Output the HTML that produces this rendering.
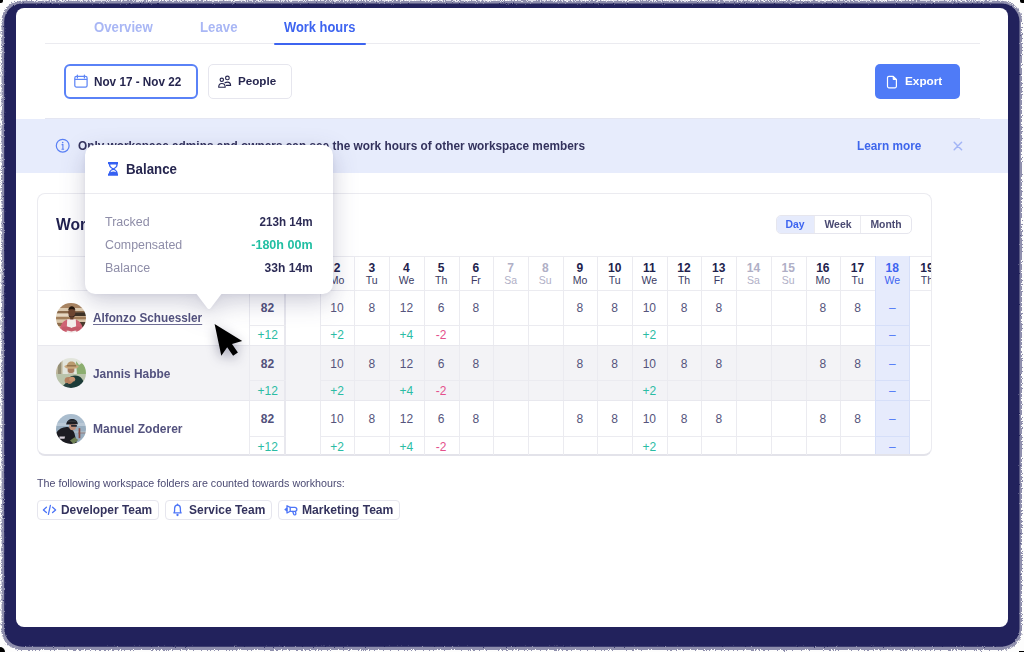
<!DOCTYPE html>
<html><head><meta charset="utf-8">
<style>
*{box-sizing:border-box;margin:0;padding:0}
html,body{width:1024px;height:652px;overflow:hidden;background:#fdfdfd;font-family:"Liberation Sans",sans-serif;position:relative}
.a{position:absolute}
.t{position:absolute;line-height:1;white-space:nowrap}
</style></head>
<body>
<svg class="a" style="left:0;top:0" width="1024" height="652" viewBox="0 0 1024 652"><defs><filter id="rough" x="-2%" y="-2%" width="104%" height="104%"><feTurbulence type="fractalNoise" baseFrequency="1.3" numOctaves="1" seed="3" result="n"/><feDisplacementMap in="SourceGraphic" in2="n" scale="5" xChannelSelector="R" yChannelSelector="G" result="d"/><feGaussianBlur in="d" stdDeviation=".45"/></filter><filter id="rough2" x="-2%" y="-2%" width="104%" height="104%"><feTurbulence type="fractalNoise" baseFrequency="1.1" numOctaves="1" seed="7" result="n"/><feDisplacementMap in="SourceGraphic" in2="n" scale="2.5" xChannelSelector="R" yChannelSelector="G"/></filter></defs><rect x="1.5" y="0.8" width="1020.5" height="649.2" rx="20" fill="#23235b" fill-opacity=".5" filter="url(#rough)"/><rect x="4.2" y="3.4" width="1015.3" height="643.3" rx="18" fill="#23235b" filter="url(#rough2)"/></svg>
<div class="a" style="left:0;top:0;width:3px;height:2.5px;background:#000;border-bottom-right-radius:2px"></div>
<div class="a" style="left:1020px;top:0;width:4px;height:2.5px;background:#000;border-bottom-left-radius:2px"></div>
<div class="a" style="left:1019px;top:651px;width:5px;height:1px;background:#000"></div>
<div class="a" style="left:0;top:647px;width:5px;height:5px;background:#000;border-top-right-radius:5px"></div>
<div class="a" style="left:16.00px;top:7.60px;width:992.00px;height:619.80px;background:#fff;border-radius:8px"></div>
<div class="t" style="left:94.00px;top:20.05px;font-size:14.0px;color:#a9b7f5;font-weight:700;transform:scaleX(0.9427);transform-origin:left center;">Overview</div>
<div class="t" style="left:199.50px;top:20.05px;font-size:14.0px;color:#a9b7f5;font-weight:700;transform:scaleX(0.9445);transform-origin:left center;">Leave</div>
<div class="t" style="left:283.60px;top:20.72px;font-size:13.8px;color:#3d64f0;font-weight:700;transform:scaleX(0.9345);transform-origin:left center;">Work hours</div>
<div class="a" style="left:44.50px;top:43.30px;width:935.50px;height:1.00px;background:#ebebf0"></div>
<div class="a" style="left:274.00px;top:42.50px;width:92.00px;height:2.20px;background:#3d64f0;border-radius:1px"></div>
<div class="a" style="left:64.40px;top:64.20px;width:133.60px;height:34.80px;border:2px solid #5a82f7;border-radius:6px"></div>
<svg class="a" style="left:73px;top:74px" width="16" height="15" viewBox="0 0 16 15"><rect x="1.8" y="2.3" width="12.3" height="10.8" rx="1.6" fill="none" stroke="#5f86f6" stroke-width="1.25"/><line x1="1.8" y1="5.4" x2="14.1" y2="5.4" stroke="#5f86f6" stroke-width="1.2"/><line x1="4.4" y1="1" x2="4.4" y2="4" stroke="#5f86f6" stroke-width="1.2" stroke-linecap="round"/><line x1="11.4" y1="1" x2="11.4" y2="4" stroke="#5f86f6" stroke-width="1.2" stroke-linecap="round"/></svg>
<div class="t" style="left:93.90px;top:75.70px;font-size:12.4px;color:#26264f;font-weight:700;transform:scaleX(0.9460);transform-origin:left center;">Nov 17 - Nov 22</div>
<div class="a" style="left:208.30px;top:64.40px;width:84.00px;height:34.20px;border:1px solid #e6e6ee;border-radius:5px"></div>
<svg class="a" style="left:217px;top:75px" width="16" height="14" viewBox="0 0 16 14"><circle cx="4.8" cy="4.8" r="1.7" fill="none" stroke="#26264f" stroke-width="1.15"/><path d="M1.7 12.2C1.7 9.9 3.1 8.5 4.9 8.5S8.2 9.9 8.2 12.2Z" fill="none" stroke="#26264f" stroke-width="1.15" stroke-linejoin="round"/><circle cx="10.4" cy="2.9" r="1.85" fill="none" stroke="#26264f" stroke-width="1.15"/><path d="M8 7.8C8.6 7.4 9.4 7.1 10.4 7.1 12.3 7.1 13.6 8.5 13.6 10.4H9.5" fill="none" stroke="#26264f" stroke-width="1.15" stroke-linejoin="round" stroke-linecap="round"/></svg>
<div class="t" style="left:238.00px;top:76.11px;font-size:11.8px;color:#26264f;font-weight:700;transform:scaleX(0.9874);transform-origin:left center;">People</div>
<div class="a" style="left:875.30px;top:64.30px;width:84.50px;height:34.50px;background:#4f7bf7;border-radius:5px"></div>
<svg class="a" style="left:886px;top:74.5px" width="12" height="14" viewBox="0 0 12 14"><path d="M3 1.3H7.2L10.4 4.5V11.3A1.5 1.5 0 0 1 8.9 12.8H3A1.5 1.5 0 0 1 1.5 11.3V2.8A1.5 1.5 0 0 1 3 1.3Z" fill="none" stroke="#fff" stroke-width="1.2" stroke-linejoin="round"/><path d="M7.2 1.3V4.5H10.4Z" fill="#fff" stroke="#fff" stroke-width="1" stroke-linejoin="round"/></svg>
<div class="t" style="left:904.90px;top:76.31px;font-size:11.8px;color:#fff;font-weight:700;transform:scaleX(0.9980);transform-origin:left center;">Export</div>
<div class="a" style="left:16.00px;top:118.50px;width:992.00px;height:54.00px;background:#e7ecfc"></div>
<svg class="a" style="left:55px;top:138px" width="16" height="16" viewBox="0 0 16 16"><circle cx="7.7" cy="7.7" r="6.4" fill="none" stroke="#5a80f5" stroke-width="1.2"/><circle cx="7.7" cy="4.6" r=".8" fill="#5a80f5"/><path d="M6.6 6.6h1.3v4.6M6.5 11.2h2.6" fill="none" stroke="#5a80f5" stroke-width="1.1"/></svg>
<div class="t" style="left:78.40px;top:140.19px;font-size:12.3px;color:#33325d;font-weight:700;transform:scaleX(0.9622);transform-origin:left center;">Only workspace admins and owners can see the work hours of other workspace members</div>
<div class="t" style="left:856.90px;top:140.24px;font-size:12.0px;color:#3e66ec;font-weight:700;transform:scaleX(0.9838);transform-origin:left center;">Learn more</div>
<svg class="a" style="left:950px;top:138px" width="16" height="16" viewBox="950 138 16 16"><path d="M954.2 142.3L961.6 149.7M961.6 142.3L954.2 149.7" stroke="#a3b5f6" stroke-width="1.5" stroke-linecap="round"/></svg>
<div class="a" style="left:37.00px;top:193.30px;width:894.50px;height:262.90px;border:1px solid #ebebf0;border-bottom:2px solid #e3e3ea;border-radius:8px;background:#fff"></div>
<div class="t" style="left:56.00px;top:216.22px;font-size:16.4px;color:#1f1f4e;font-weight:700;transform:scaleX(0.9530);transform-origin:left center;">Work hours</div>
<div class="a" style="left:776.00px;top:214.60px;width:135.50px;height:19.60px;border:1px solid #e6e6ee;border-radius:5px;overflow:hidden"></div>
<div class="a" style="left:777.00px;top:215.60px;width:37.10px;height:17.60px;background:#e6ebfc;border-radius:4px 0 0 4px"></div>
<div class="a" style="left:814.10px;top:215.60px;width:1.00px;height:17.60px;background:#ebebf0"></div>
<div class="a" style="left:859.80px;top:215.60px;width:1.00px;height:17.60px;background:#ebebf0"></div>
<div class="t" style="left:694.85px;width:200px;text-align:center;top:219.23px;font-size:10.6px;color:#3d64f0;font-weight:700;transform:scaleX(0.9826);transform-origin:center center;">Day</div>
<div class="t" style="left:737.70px;width:200px;text-align:center;top:219.23px;font-size:10.6px;color:#4a4a72;font-weight:700;transform:scaleX(0.9897);transform-origin:center center;">Week</div>
<div class="t" style="left:786.00px;width:200px;text-align:center;top:219.23px;font-size:10.6px;color:#4a4a72;font-weight:700;transform:scaleX(0.9817);transform-origin:center center;">Month</div>
<div class="a" style="left:38.00px;top:256.20px;width:892.50px;height:1.20px;background:#ebebf0"></div>
<div class="a" style="left:38.00px;top:289.60px;width:892.50px;height:1.00px;background:#ebebf0"></div>
<div class="a" style="left:38.00px;top:346.00px;width:836.90px;height:55.20px;background:#f3f3f6"></div>
<div class="a" style="left:874.90px;top:256.20px;width:34.70px;height:198.00px;background:#e6ebfc;border-left:1px solid #d6dff9;border-right:1px solid #d6dff9"></div>
<div class="t" style="left:202.35px;width:200px;text-align:center;top:261.64px;font-size:12px;color:#b0afc6;font-weight:700;">1</div>
<div class="t" style="left:202.35px;width:200px;text-align:center;top:274.61px;font-size:10.5px;color:#b0afc6;font-weight:400;">Su</div>
<div class="t" style="left:237.05px;width:200px;text-align:center;top:261.64px;font-size:12px;color:#22224d;font-weight:700;">2</div>
<div class="t" style="left:237.05px;width:200px;text-align:center;top:274.61px;font-size:10.5px;color:#3a3a63;font-weight:400;">Mo</div>
<div class="t" style="left:271.75px;width:200px;text-align:center;top:261.64px;font-size:12px;color:#22224d;font-weight:700;">3</div>
<div class="t" style="left:271.75px;width:200px;text-align:center;top:274.61px;font-size:10.5px;color:#3a3a63;font-weight:400;">Tu</div>
<div class="t" style="left:306.45px;width:200px;text-align:center;top:261.64px;font-size:12px;color:#22224d;font-weight:700;">4</div>
<div class="t" style="left:306.45px;width:200px;text-align:center;top:274.61px;font-size:10.5px;color:#3a3a63;font-weight:400;">We</div>
<div class="t" style="left:341.15px;width:200px;text-align:center;top:261.64px;font-size:12px;color:#22224d;font-weight:700;">5</div>
<div class="t" style="left:341.15px;width:200px;text-align:center;top:274.61px;font-size:10.5px;color:#3a3a63;font-weight:400;">Th</div>
<div class="t" style="left:375.85px;width:200px;text-align:center;top:261.64px;font-size:12px;color:#22224d;font-weight:700;">6</div>
<div class="t" style="left:375.85px;width:200px;text-align:center;top:274.61px;font-size:10.5px;color:#3a3a63;font-weight:400;">Fr</div>
<div class="t" style="left:410.55px;width:200px;text-align:center;top:261.64px;font-size:12px;color:#b0afc6;font-weight:700;">7</div>
<div class="t" style="left:410.55px;width:200px;text-align:center;top:274.61px;font-size:10.5px;color:#b0afc6;font-weight:400;">Sa</div>
<div class="t" style="left:445.25px;width:200px;text-align:center;top:261.64px;font-size:12px;color:#b0afc6;font-weight:700;">8</div>
<div class="t" style="left:445.25px;width:200px;text-align:center;top:274.61px;font-size:10.5px;color:#b0afc6;font-weight:400;">Su</div>
<div class="t" style="left:479.95px;width:200px;text-align:center;top:261.64px;font-size:12px;color:#22224d;font-weight:700;">9</div>
<div class="t" style="left:479.95px;width:200px;text-align:center;top:274.61px;font-size:10.5px;color:#3a3a63;font-weight:400;">Mo</div>
<div class="t" style="left:514.65px;width:200px;text-align:center;top:261.64px;font-size:12px;color:#22224d;font-weight:700;">10</div>
<div class="t" style="left:514.65px;width:200px;text-align:center;top:274.61px;font-size:10.5px;color:#3a3a63;font-weight:400;">Tu</div>
<div class="t" style="left:549.35px;width:200px;text-align:center;top:261.64px;font-size:12px;color:#22224d;font-weight:700;">11</div>
<div class="t" style="left:549.35px;width:200px;text-align:center;top:274.61px;font-size:10.5px;color:#3a3a63;font-weight:400;">We</div>
<div class="t" style="left:584.05px;width:200px;text-align:center;top:261.64px;font-size:12px;color:#22224d;font-weight:700;">12</div>
<div class="t" style="left:584.05px;width:200px;text-align:center;top:274.61px;font-size:10.5px;color:#3a3a63;font-weight:400;">Th</div>
<div class="t" style="left:618.75px;width:200px;text-align:center;top:261.64px;font-size:12px;color:#22224d;font-weight:700;">13</div>
<div class="t" style="left:618.75px;width:200px;text-align:center;top:274.61px;font-size:10.5px;color:#3a3a63;font-weight:400;">Fr</div>
<div class="t" style="left:653.45px;width:200px;text-align:center;top:261.64px;font-size:12px;color:#b0afc6;font-weight:700;">14</div>
<div class="t" style="left:653.45px;width:200px;text-align:center;top:274.61px;font-size:10.5px;color:#b0afc6;font-weight:400;">Sa</div>
<div class="t" style="left:688.15px;width:200px;text-align:center;top:261.64px;font-size:12px;color:#b0afc6;font-weight:700;">15</div>
<div class="t" style="left:688.15px;width:200px;text-align:center;top:274.61px;font-size:10.5px;color:#b0afc6;font-weight:400;">Su</div>
<div class="t" style="left:722.85px;width:200px;text-align:center;top:261.64px;font-size:12px;color:#22224d;font-weight:700;">16</div>
<div class="t" style="left:722.85px;width:200px;text-align:center;top:274.61px;font-size:10.5px;color:#3a3a63;font-weight:400;">Mo</div>
<div class="t" style="left:757.55px;width:200px;text-align:center;top:261.64px;font-size:12px;color:#22224d;font-weight:700;">17</div>
<div class="t" style="left:757.55px;width:200px;text-align:center;top:274.61px;font-size:10.5px;color:#3a3a63;font-weight:400;">Tu</div>
<div class="t" style="left:792.25px;width:200px;text-align:center;top:261.64px;font-size:12px;color:#3d64f0;font-weight:700;">18</div>
<div class="t" style="left:792.25px;width:200px;text-align:center;top:274.61px;font-size:10.5px;color:#3d64f0;font-weight:400;">We</div>
<div class="a" style="left:0;top:0;width:930.5px;height:300px;overflow:hidden">
<div class="t" style="left:826.95px;width:200px;text-align:center;top:261.64px;font-size:12px;color:#22224d;font-weight:700;">19</div>
<div class="t" style="left:826.95px;width:200px;text-align:center;top:274.61px;font-size:10.5px;color:#3a3a63;font-weight:400;">Th</div>
</div>
<div class="a" style="left:249.30px;top:256.20px;width:1.00px;height:199.00px;background:#ebebf0"></div>
<div class="a" style="left:284.20px;top:256.20px;width:1.60px;height:199.00px;background:#e8e8ee"></div>
<div class="a" style="left:319.70px;top:256.20px;width:1.00px;height:199.00px;background:#ebebf0"></div>
<div class="a" style="left:354.40px;top:256.20px;width:1.00px;height:199.00px;background:#ebebf0"></div>
<div class="a" style="left:389.10px;top:256.20px;width:1.00px;height:199.00px;background:#ebebf0"></div>
<div class="a" style="left:423.80px;top:256.20px;width:1.00px;height:199.00px;background:#ebebf0"></div>
<div class="a" style="left:458.50px;top:256.20px;width:1.00px;height:199.00px;background:#ebebf0"></div>
<div class="a" style="left:493.20px;top:256.20px;width:1.00px;height:199.00px;background:#ebebf0"></div>
<div class="a" style="left:527.90px;top:256.20px;width:1.00px;height:199.00px;background:#ebebf0"></div>
<div class="a" style="left:562.60px;top:256.20px;width:1.00px;height:199.00px;background:#ebebf0"></div>
<div class="a" style="left:597.30px;top:256.20px;width:1.00px;height:199.00px;background:#ebebf0"></div>
<div class="a" style="left:632.00px;top:256.20px;width:1.00px;height:199.00px;background:#ebebf0"></div>
<div class="a" style="left:666.70px;top:256.20px;width:1.00px;height:199.00px;background:#ebebf0"></div>
<div class="a" style="left:701.40px;top:256.20px;width:1.00px;height:199.00px;background:#ebebf0"></div>
<div class="a" style="left:736.10px;top:256.20px;width:1.00px;height:199.00px;background:#ebebf0"></div>
<div class="a" style="left:770.80px;top:256.20px;width:1.00px;height:199.00px;background:#ebebf0"></div>
<div class="a" style="left:805.50px;top:256.20px;width:1.00px;height:199.00px;background:#ebebf0"></div>
<div class="a" style="left:840.20px;top:256.20px;width:1.00px;height:199.00px;background:#ebebf0"></div>
<div class="a" style="left:250.00px;top:324.50px;width:35.50px;height:1.00px;background:#ebebf0"></div>
<div class="a" style="left:319.70px;top:324.50px;width:555.20px;height:1.00px;background:#ebebf0"></div>
<div class="a" style="left:875.90px;top:324.50px;width:32.70px;height:1.00px;background:#d6dff9"></div>
<div class="a" style="left:38.00px;top:344.50px;width:836.90px;height:1.40px;background:#e8e8ee"></div>
<div class="a" style="left:875.90px;top:344.50px;width:32.70px;height:1.40px;background:#d6dff9"></div>
<div class="a" style="left:909.60px;top:344.50px;width:20.90px;height:1.40px;background:#e8e8ee"></div>
<div class="a" style="left:250.00px;top:380.10px;width:35.50px;height:1.00px;background:#ebebf0"></div>
<div class="a" style="left:319.70px;top:380.10px;width:555.20px;height:1.00px;background:#ebebf0"></div>
<div class="a" style="left:875.90px;top:380.10px;width:32.70px;height:1.00px;background:#d6dff9"></div>
<div class="a" style="left:38.00px;top:400.10px;width:836.90px;height:1.40px;background:#e8e8ee"></div>
<div class="a" style="left:875.90px;top:400.10px;width:32.70px;height:1.40px;background:#d6dff9"></div>
<div class="a" style="left:909.60px;top:400.10px;width:20.90px;height:1.40px;background:#e8e8ee"></div>
<div class="a" style="left:250.00px;top:435.70px;width:35.50px;height:1.00px;background:#ebebf0"></div>
<div class="a" style="left:319.70px;top:435.70px;width:555.20px;height:1.00px;background:#ebebf0"></div>
<div class="a" style="left:875.90px;top:435.70px;width:32.70px;height:1.00px;background:#d6dff9"></div>
<div class="t" style="left:92.90px;top:311.97px;font-size:12.2px;color:#53527e;font-weight:700;transform:scaleX(0.9654);transform-origin:left center;text-decoration:underline;text-underline-offset:2px;text-decoration-thickness:1px;text-decoration-color:#6f6e95">Alfonzo Schuessler</div>
<div class="t" style="left:167.50px;width:200px;text-align:center;top:302.04px;font-size:12px;color:#52517c;font-weight:700;">82</div>
<div class="t" style="left:167.80px;width:200px;text-align:center;top:329.44px;font-size:12px;color:#2bbca4;font-weight:400;">+12</div>
<div class="t" style="left:237.05px;width:200px;text-align:center;top:302.04px;font-size:12px;color:#55547c;font-weight:400;">10</div>
<div class="t" style="left:237.05px;width:200px;text-align:center;top:329.44px;font-size:12px;color:#2bbca4;font-weight:400;">+2</div>
<div class="t" style="left:271.75px;width:200px;text-align:center;top:302.04px;font-size:12px;color:#55547c;font-weight:400;">8</div>
<div class="t" style="left:306.45px;width:200px;text-align:center;top:302.04px;font-size:12px;color:#55547c;font-weight:400;">12</div>
<div class="t" style="left:306.45px;width:200px;text-align:center;top:329.44px;font-size:12px;color:#2bbca4;font-weight:400;">+4</div>
<div class="t" style="left:341.15px;width:200px;text-align:center;top:302.04px;font-size:12px;color:#55547c;font-weight:400;">6</div>
<div class="t" style="left:341.15px;width:200px;text-align:center;top:329.44px;font-size:12px;color:#e4508c;font-weight:400;">-2</div>
<div class="t" style="left:375.85px;width:200px;text-align:center;top:302.04px;font-size:12px;color:#55547c;font-weight:400;">8</div>
<div class="t" style="left:479.95px;width:200px;text-align:center;top:302.04px;font-size:12px;color:#55547c;font-weight:400;">8</div>
<div class="t" style="left:514.65px;width:200px;text-align:center;top:302.04px;font-size:12px;color:#55547c;font-weight:400;">8</div>
<div class="t" style="left:549.35px;width:200px;text-align:center;top:302.04px;font-size:12px;color:#55547c;font-weight:400;">10</div>
<div class="t" style="left:549.35px;width:200px;text-align:center;top:329.44px;font-size:12px;color:#2bbca4;font-weight:400;">+2</div>
<div class="t" style="left:584.05px;width:200px;text-align:center;top:302.04px;font-size:12px;color:#55547c;font-weight:400;">8</div>
<div class="t" style="left:618.75px;width:200px;text-align:center;top:302.04px;font-size:12px;color:#55547c;font-weight:400;">8</div>
<div class="t" style="left:722.85px;width:200px;text-align:center;top:302.04px;font-size:12px;color:#55547c;font-weight:400;">8</div>
<div class="t" style="left:757.55px;width:200px;text-align:center;top:302.04px;font-size:12px;color:#55547c;font-weight:400;">8</div>
<div class="t" style="left:792.25px;width:200px;text-align:center;top:302.04px;font-size:12px;color:#5079f7;font-weight:400;">–</div>
<div class="t" style="left:792.25px;width:200px;text-align:center;top:329.44px;font-size:12px;color:#5079f7;font-weight:400;">–</div>
<div class="t" style="left:92.90px;top:367.57px;font-size:12.2px;color:#53527e;font-weight:700;transform:scaleX(0.9767);transform-origin:left center;">Jannis Habbe</div>
<div class="t" style="left:167.50px;width:200px;text-align:center;top:357.64px;font-size:12px;color:#52517c;font-weight:700;">82</div>
<div class="t" style="left:167.80px;width:200px;text-align:center;top:385.04px;font-size:12px;color:#2bbca4;font-weight:400;">+12</div>
<div class="t" style="left:237.05px;width:200px;text-align:center;top:357.64px;font-size:12px;color:#55547c;font-weight:400;">10</div>
<div class="t" style="left:237.05px;width:200px;text-align:center;top:385.04px;font-size:12px;color:#2bbca4;font-weight:400;">+2</div>
<div class="t" style="left:271.75px;width:200px;text-align:center;top:357.64px;font-size:12px;color:#55547c;font-weight:400;">8</div>
<div class="t" style="left:306.45px;width:200px;text-align:center;top:357.64px;font-size:12px;color:#55547c;font-weight:400;">12</div>
<div class="t" style="left:306.45px;width:200px;text-align:center;top:385.04px;font-size:12px;color:#2bbca4;font-weight:400;">+4</div>
<div class="t" style="left:341.15px;width:200px;text-align:center;top:357.64px;font-size:12px;color:#55547c;font-weight:400;">6</div>
<div class="t" style="left:341.15px;width:200px;text-align:center;top:385.04px;font-size:12px;color:#e4508c;font-weight:400;">-2</div>
<div class="t" style="left:375.85px;width:200px;text-align:center;top:357.64px;font-size:12px;color:#55547c;font-weight:400;">8</div>
<div class="t" style="left:479.95px;width:200px;text-align:center;top:357.64px;font-size:12px;color:#55547c;font-weight:400;">8</div>
<div class="t" style="left:514.65px;width:200px;text-align:center;top:357.64px;font-size:12px;color:#55547c;font-weight:400;">8</div>
<div class="t" style="left:549.35px;width:200px;text-align:center;top:357.64px;font-size:12px;color:#55547c;font-weight:400;">10</div>
<div class="t" style="left:549.35px;width:200px;text-align:center;top:385.04px;font-size:12px;color:#2bbca4;font-weight:400;">+2</div>
<div class="t" style="left:584.05px;width:200px;text-align:center;top:357.64px;font-size:12px;color:#55547c;font-weight:400;">8</div>
<div class="t" style="left:618.75px;width:200px;text-align:center;top:357.64px;font-size:12px;color:#55547c;font-weight:400;">8</div>
<div class="t" style="left:722.85px;width:200px;text-align:center;top:357.64px;font-size:12px;color:#55547c;font-weight:400;">8</div>
<div class="t" style="left:757.55px;width:200px;text-align:center;top:357.64px;font-size:12px;color:#55547c;font-weight:400;">8</div>
<div class="t" style="left:792.25px;width:200px;text-align:center;top:357.64px;font-size:12px;color:#5079f7;font-weight:400;">–</div>
<div class="t" style="left:792.25px;width:200px;text-align:center;top:385.04px;font-size:12px;color:#5079f7;font-weight:400;">–</div>
<div class="t" style="left:92.90px;top:423.17px;font-size:12.2px;color:#53527e;font-weight:700;transform:scaleX(0.9862);transform-origin:left center;">Manuel Zoderer</div>
<div class="t" style="left:167.50px;width:200px;text-align:center;top:413.24px;font-size:12px;color:#52517c;font-weight:700;">82</div>
<div class="t" style="left:167.80px;width:200px;text-align:center;top:440.64px;font-size:12px;color:#2bbca4;font-weight:400;">+12</div>
<div class="t" style="left:237.05px;width:200px;text-align:center;top:413.24px;font-size:12px;color:#55547c;font-weight:400;">10</div>
<div class="t" style="left:237.05px;width:200px;text-align:center;top:440.64px;font-size:12px;color:#2bbca4;font-weight:400;">+2</div>
<div class="t" style="left:271.75px;width:200px;text-align:center;top:413.24px;font-size:12px;color:#55547c;font-weight:400;">8</div>
<div class="t" style="left:306.45px;width:200px;text-align:center;top:413.24px;font-size:12px;color:#55547c;font-weight:400;">12</div>
<div class="t" style="left:306.45px;width:200px;text-align:center;top:440.64px;font-size:12px;color:#2bbca4;font-weight:400;">+4</div>
<div class="t" style="left:341.15px;width:200px;text-align:center;top:413.24px;font-size:12px;color:#55547c;font-weight:400;">6</div>
<div class="t" style="left:341.15px;width:200px;text-align:center;top:440.64px;font-size:12px;color:#e4508c;font-weight:400;">-2</div>
<div class="t" style="left:375.85px;width:200px;text-align:center;top:413.24px;font-size:12px;color:#55547c;font-weight:400;">8</div>
<div class="t" style="left:479.95px;width:200px;text-align:center;top:413.24px;font-size:12px;color:#55547c;font-weight:400;">8</div>
<div class="t" style="left:514.65px;width:200px;text-align:center;top:413.24px;font-size:12px;color:#55547c;font-weight:400;">8</div>
<div class="t" style="left:549.35px;width:200px;text-align:center;top:413.24px;font-size:12px;color:#55547c;font-weight:400;">10</div>
<div class="t" style="left:549.35px;width:200px;text-align:center;top:440.64px;font-size:12px;color:#2bbca4;font-weight:400;">+2</div>
<div class="t" style="left:584.05px;width:200px;text-align:center;top:413.24px;font-size:12px;color:#55547c;font-weight:400;">8</div>
<div class="t" style="left:618.75px;width:200px;text-align:center;top:413.24px;font-size:12px;color:#55547c;font-weight:400;">8</div>
<div class="t" style="left:722.85px;width:200px;text-align:center;top:413.24px;font-size:12px;color:#55547c;font-weight:400;">8</div>
<div class="t" style="left:757.55px;width:200px;text-align:center;top:413.24px;font-size:12px;color:#55547c;font-weight:400;">8</div>
<div class="t" style="left:792.25px;width:200px;text-align:center;top:413.24px;font-size:12px;color:#5079f7;font-weight:400;">–</div>
<div class="t" style="left:792.25px;width:200px;text-align:center;top:440.64px;font-size:12px;color:#5079f7;font-weight:400;">–</div>
<svg class="a" style="left:56px;top:302.7px" width="30" height="30" viewBox="0 0 30 30"><defs><clipPath id="av0"><circle cx="15" cy="15" r="15"/></clipPath><filter id="avb0" x="-10%" y="-10%" width="120%" height="120%"><feGaussianBlur stdDeviation=".5"/></filter></defs><g clip-path="url(#av0)"><g filter="url(#avb0)"><rect width="30" height="30" fill="#c4a888"/>
 <rect y="0" width="30" height="5" fill="#a88462"/>
 <rect y="5" width="30" height="3" fill="#dccab0"/>
 <rect y="8" width="30" height="2.5" fill="#8a6a4c"/>
 <rect y="10.5" width="14" height="3" fill="#e6d8c2"/>
 <rect x="18" y="9.5" width="12" height="3.5" fill="#3e3028"/>
 <rect y="14" width="30" height="2.5" fill="#a27e5a"/>
 <rect y="16.5" width="30" height="3" fill="#d8c6aa"/>
 <rect x="0" y="20" width="30" height="3" fill="#8e6c4c"/>
 <rect x="23" y="19" width="7" height="8" fill="#4a3a2e"/>
 <path d="M3.5 30c0-8 3.5-14 12-14S27 22 27.5 30z" fill="#cf6474"/>
 <path d="M11.2 16.3h8.6l.6 13.7H10.6z" fill="#f3eeec"/>
 <path d="M6 24.5c3-1.5 6.5-1 9.5.5 3-1.5 6.5-2 9.5-.5v3.5c-3-1-6.5-.6-9.5.6-3-1.2-6.5-1.6-9.5-.6z" fill="#c45a6a"/>
 <ellipse cx="15.8" cy="9.6" rx="3.6" ry="4.8" fill="#6e4632"/>
 <path d="M12.2 7.4c.3-3 2-4.2 3.6-4.2s3.4 1.2 3.6 4.2c-1-.8-2.2-1.1-3.6-1.1s-2.6.3-3.6 1.1z" fill="#24180f"/>
 <path d="M12.6 11.8c.9 2.4 5.5 2.4 6.4 0 0 1.6-.8 3-3.2 3s-3.2-1.4-3.2-3z" fill="#30201a"/>
 <rect x="14.2" y="13.8" width="3.2" height="2.6" fill="#5e3c2c"/></g></g></svg>
<svg class="a" style="left:56px;top:358.3px" width="30" height="30" viewBox="0 0 30 30"><defs><clipPath id="av1"><circle cx="15" cy="15" r="15"/></clipPath><filter id="avb1" x="-10%" y="-10%" width="120%" height="120%"><feGaussianBlur stdDeviation=".5"/></filter></defs><g clip-path="url(#av1)"><g filter="url(#avb1)"><rect width="30" height="30" fill="#e2e5dc"/>
 <path d="M0 0h6.5v30H0z" fill="#bdb59a"/>
 <path d="M2 4h3v13H2z" fill="#958f76"/>
 <path d="M20 3l3 4 3-2 4 3v9H21z" fill="#8cae70"/>
 <rect x="0" y="16" width="30" height="14" fill="#b9c3aa"/>
 <path d="M8.5 30C9.5 22 13.5 17.5 19 17.5 25 17.5 28 22 29 30Z" fill="#1f3b39"/>
 <ellipse cx="15" cy="12" rx="3.4" ry="3.9" fill="#a87c5e"/>
 <path d="M11.8 13.2c.8 2.4 5.2 2.6 6.2.2v2c-1.6 1.1-4.6 1.1-6.2 0z" fill="#cfc6bc"/>
 <ellipse cx="15.5" cy="8.6" rx="7.2" ry="2.2" fill="#c9a77c"/>
 <path d="M10.8 8.6C11 4.8 12.8 3.4 15.5 3.4 18.2 3.4 20 4.8 20.2 8.6Z" fill="#b99a6e"/>
 <rect x="10.8" y="7.2" width="9.4" height="1.2" fill="#8a6c4a"/>
 <ellipse cx="12.8" cy="22.5" rx="4.2" ry="3.4" fill="#b4805f"/>
 <ellipse cx="16.2" cy="21.2" rx="3" ry="2.5" fill="#c79370"/>
 <path d="M6 30c1-3 3-5 6-5l2 5z" fill="#27423f"/></g></g></svg>
<svg class="a" style="left:56px;top:413.9px" width="30" height="30" viewBox="0 0 30 30"><defs><clipPath id="av2"><circle cx="15" cy="15" r="15"/></clipPath><filter id="avb2" x="-10%" y="-10%" width="120%" height="120%"><feGaussianBlur stdDeviation=".5"/></filter></defs><g clip-path="url(#av2)"><g filter="url(#avb2)"><rect width="30" height="30" fill="#b9c8d6"/>
 <rect y="0" width="30" height="9" fill="#aabdce"/>
 <rect y="12" width="30" height="18" fill="#98adbf"/>
 <rect x="17" y="17" width="13" height="2" fill="#a7b8c4"/>
 <rect x="22.6" y="14.2" width="1.7" height="10" fill="#8b4a40"/>
 <path d="M22 19h8" stroke="#8b5a50" stroke-width=".6"/>
 <path d="M0 30V19c2.5-4 6.5-6 10.5-6 3.5 0 6.5 2.5 8 6.5L21 30z" fill="#1b1d22"/>
 <path d="M3.5 22.6h5.6l-.6 2.2H3.5z" fill="#d7cfd8"/>
 <path d="M14 26.5l4.6-3.2 3.6 2.6-4.6 4.1z" fill="#6e7f52"/>
 <ellipse cx="16.6" cy="12.4" rx="3.4" ry="3.8" fill="#bd8e7a"/>
 <rect x="15" y="11" width="6" height="1.7" rx=".6" fill="#252830"/>
 <path d="M10.2 10.6c.2-3.6 3-5.6 6-5.6 3 0 5.4 1.8 5.6 5.2z" fill="#1c1e24"/>
 <path d="M12 7.2h8" stroke="#4a4e58" stroke-width=".6"/></g></g></svg>
<div class="t" style="left:36.90px;top:478.23px;font-size:10.6px;color:#4b4a73;font-weight:400;transform:scaleX(1.0110);transform-origin:left center;">The following workspace folders are counted towards workhours:</div>
<div class="a" style="left:36.80px;top:500.40px;width:122.10px;height:19.30px;border:1px solid #e6e6ee;border-radius:4px"></div>
<div class="a" style="left:164.80px;top:500.40px;width:107.30px;height:19.30px;border:1px solid #e6e6ee;border-radius:4px"></div>
<div class="a" style="left:277.60px;top:500.40px;width:122.50px;height:19.30px;border:1px solid #e6e6ee;border-radius:4px"></div>
<div class="t" style="left:61.00px;top:504.27px;font-size:12.2px;color:#34335e;font-weight:700;transform:scaleX(0.9779);transform-origin:left center;">Developer Team</div>
<div class="t" style="left:189.20px;top:504.27px;font-size:12.2px;color:#34335e;font-weight:700;transform:scaleX(0.9819);transform-origin:left center;">Service Team</div>
<div class="t" style="left:302.00px;top:504.27px;font-size:12.2px;color:#34335e;font-weight:700;transform:scaleX(0.9947);transform-origin:left center;">Marketing Team</div>
<svg class="a" style="left:40px;top:503px" width="18" height="14" viewBox="40 503 18 14"><path d="M46.4 507.2L43.4 509.9L46.4 512.6M52.6 507.2L55.6 509.9L52.6 512.6M50.4 505.4L48.4 514.4" fill="none" stroke="#4d75f7" stroke-width="1.3" stroke-linecap="round" stroke-linejoin="round"/></svg>
<svg class="a" style="left:170px;top:502px" width="16" height="16" viewBox="170 502 16 16"><path d="M177.5 504.9C175.6 505.2 174.6 506.7 174.6 508.5V511C174.6 511.8 174.1 512.3 173.9 512.9H181.1C180.9 512.3 180.4 511.8 180.4 511V508.5C180.4 506.7 179.4 505.2 177.5 504.9Z" fill="none" stroke="#4d75f7" stroke-width="1.3" stroke-linejoin="round"/><path d="M177.5 504.2V505" stroke="#4d75f7" stroke-width="1.3" stroke-linecap="round"/><circle cx="177.5" cy="515" r="1.15" fill="#4d75f7"/></svg>
<svg class="a" style="left:282px;top:502px" width="18" height="16" viewBox="282 502 18 16"><path d="M286.9 508.1L285 509.5L286.9 510.9Z" fill="#4d75f7" stroke="#4d75f7" stroke-width="1.1" stroke-linejoin="round"/><path d="M287 505.7L290.2 507.4V511.3L287 513Z" fill="none" stroke="#4d75f7" stroke-width="1.3" stroke-linejoin="round"/><path d="M290.2 507.4H294.9A1.95 1.95 0 0 1 294.9 511.3H290.2" fill="none" stroke="#4d75f7" stroke-width="1.3" stroke-linejoin="round"/><path d="M292.7 511.5L293.7 514.2A1.15 1.15 0 0 0 295.9 513.6L295.4 511.6" fill="none" stroke="#4d75f7" stroke-width="1.3" stroke-linecap="round" stroke-linejoin="round"/></svg>
<div class="a" style="left:44.50px;top:118.00px;width:935.50px;height:1.00px;background:#e4e6f2"></div>
<div class="a" style="left:0;top:0;width:1024px;height:652px;filter:drop-shadow(0 8px 12px rgba(40,40,90,.22)) drop-shadow(0 1px 2px rgba(40,40,90,.06))">
<div class="a" style="left:84.9px;top:144.5px;width:248px;height:149.7px;background:#fff;border-radius:10px"></div>
<svg class="a" style="left:195px;top:292.8px" width="28" height="18" viewBox="0 0 28 18"><path d="M1.6 1h24.8l-10.6 14a2.4 2.4 0 0 1-3.6 0z" fill="#fff"/></svg>
</div>
<div class="a" style="left:84.90px;top:192.80px;width:248.00px;height:1.00px;background:#ebebf0"></div>
<svg class="a" style="left:107.8px;top:162px" width="10.6" height="13.8" viewBox="0 0 10.6 13.8"><path d="M0 0H10.6V2.3H9.6V3.2C9.6 5 7.6 6.2 6.5 6.9 7.6 7.6 9.6 8.8 9.6 10.6V11.5H10.6V13.8H0V11.5H1V10.6C1 8.8 3 7.6 4.1 6.9 3 6.2 1 5 1 3.2V2.3H0Z" fill="#3560f2"/><path d="M2.4 2.5H8.2V3.2C8.2 4.6 6.5 5.7 5.3 6.3 4.1 5.7 2.4 4.6 2.4 3.2Z" fill="#fff"/><path d="M2.5 10.3C2.9 9 4.1 8.1 5.3 8.1 6.5 8.1 7.7 9 8.1 10.3 6.9 9.4 3.7 9.4 2.5 10.3Z" fill="#fff"/></svg>
<div class="t" style="left:126.20px;top:162.82px;font-size:13.8px;color:#26264f;font-weight:700;transform:scaleX(0.9618);transform-origin:left center;">Balance</div>
<div class="t" style="left:104.50px;top:215.82px;font-size:12.5px;color:#8e8da8;font-weight:400;transform:scaleX(0.9977);transform-origin:left center;">Tracked</div>
<div class="t" style="left:104.50px;top:238.92px;font-size:12.5px;color:#8e8da8;font-weight:400;transform:scaleX(0.9919);transform-origin:left center;">Compensated</div>
<div class="t" style="left:104.50px;top:262.02px;font-size:12.5px;color:#8e8da8;font-weight:400;transform:scaleX(0.9981);transform-origin:left center;">Balance</div>
<div class="t" style="right:711.00px;top:215.57px;font-size:12.2px;color:#2c2b55;font-weight:700;transform:scaleX(0.9557);transform-origin:right center;">213h 14m</div>
<div class="t" style="right:711.00px;top:238.67px;font-size:12.2px;color:#22bfa3;font-weight:700;transform:scaleX(1.0298);transform-origin:right center;">-180h 00m</div>
<div class="t" style="right:711.00px;top:261.77px;font-size:12.2px;color:#2c2b55;font-weight:700;transform:scaleX(0.9881);transform-origin:right center;">33h 14m</div>
<svg class="a" style="left:205px;top:318px;filter:drop-shadow(0 4px 6px rgba(20,20,60,.35))" width="45" height="45" viewBox="205 318 45 45" overflow="visible"><path d="M214.6 324.1L242.2 341.1L232 344L237.9 352.6L233.1 355.8L227.2 347.2L221.3 355.8Z" fill="#000"/></svg>
</body></html>
